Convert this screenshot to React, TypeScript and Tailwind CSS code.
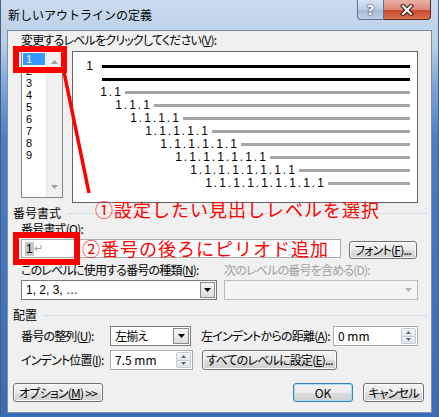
import React from 'react';

// Access-key underline
const U: React.FC<{ children: React.ReactNode }> = ({ children }) => (
  <span className="underline underline-offset-[1px]">{children}</span>
);

const Btn: React.FC<{ className?: string; focused?: boolean; children: React.ReactNode }> = ({
  className = '',
  focused = false,
  children,
}) => (
  <div
    className={`flex items-center justify-center whitespace-nowrap rounded-[3px] border ${
      focused
        ? 'border-[#3c7fb1] shadow-[inset_0_0_0_1px_#a8dcf7]'
        : 'border-[#707070] shadow-[inset_0_0_0_1px_#fbfbfb]'
    } bg-[linear-gradient(to_bottom,#f2f2f2_0%,#ebebeb_50%,#dddddd_51%,#cfcfcf_100%)] leading-[12px] ${className}`}
  >
    {children}
  </div>
);

const DownTri: React.FC<{ color?: string }> = ({ color = '#000' }) => (
  <svg width="7" height="4" viewBox="0 0 7 4">
    <path d="M0 0H7L3.5 4Z" fill={color} />
  </svg>
);

const Spin: React.FC<{ className?: string; value: string }> = ({ className = '', value }) => (
  <div className={`flex h-[20px] border border-[#abadb3] bg-white ${className}`}>
    <div className="flex flex-1 items-center pl-[4px] tracking-normal">{value}</div>
    <div className="my-[1px] mr-[1px] flex w-[15px] flex-col">
      <div className="flex flex-1 items-center justify-center rounded-t-[2px] border border-[#c5cbd5] bg-[linear-gradient(to_bottom,#f7f9fb,#e2e7ee)]">
        <svg width="5" height="3" viewBox="0 0 5 3">
          <path d="M0 3H5L2.5 0Z" fill="#4d6185" />
        </svg>
      </div>
      <div className="flex flex-1 items-center justify-center rounded-b-[2px] border border-t-0 border-[#c5cbd5] bg-[linear-gradient(to_bottom,#f2f5f8,#dde3ea)]">
        <svg width="5" height="3" viewBox="0 0 5 3">
          <path d="M0 0H5L2.5 3Z" fill="#4d6185" />
        </svg>
      </div>
    </div>
  </div>
);

const Group: React.FC<{ className?: string; title: string }> = ({ className = '', title }) => (
  <div className={`ml-[5px] mr-[4px] flex h-[12px] items-center ${className}`}>
    <span className="leading-[12px] tracking-normal">{title}</span>
    <div className="ml-[6px] h-px flex-1 bg-[#d5dfe5]" />
  </div>
);

const levelPad = [
  'pl-[27px]',
  'pl-[42px]',
  'pl-[57px]',
  'pl-[72px]',
  'pl-[87px]',
  'pl-[102px]',
  'pl-[117px]',
  'pl-[132px]',
];

const Num: React.FC<{ text: string }> = ({ text }) => (
  <span className="flex font-['Liberation_Sans',sans-serif] tracking-normal">
    {text.split('').map((c, i) => (
      <span key={i} className="inline-block w-[7px] text-center">
        {c}
      </span>
    ))}
  </span>
);

const Preview: React.FC = () => (
  <div className="ml-[9px] h-[152px] w-[346px] border border-[#646464] bg-white pt-[8px] pr-[7px] text-[12px] leading-[13px]">
    <div className="flex h-[13px] items-center pl-[13px]">
      <Num text="1" />
      <div className="ml-[9px] h-[3px] flex-1 bg-black" />
    </div>
    <div className="flex h-[13px] items-center pl-[29px]">
      <div className="h-[3px] flex-1 bg-black" />
    </div>
    {levelPad.map((pad, i) => {
      const n = i + 2;
      const text = Array(n).fill('1').join('.');
      return (
        <div key={n} className={`flex h-[13px] items-center ${pad}`}>
          <Num text={text} />
          <div className="ml-[4px] h-[3px] flex-1 bg-[#a6a6a6]" />
        </div>
      );
    })}
  </div>
);

const ListBox: React.FC = () => (
  <div className="flex h-[147px] w-[42px] border border-[#828790] bg-white text-[11px] leading-[12px]">
    <div className="flex-1 pt-[1px]">
      {['1', '2', '3', '4', '5', '6', '7', '8', '9'].map((n, i) => (
        <div
          key={n}
          className={`mx-[1px] h-[12px] pl-[3px] font-['Liberation_Sans',sans-serif] tracking-normal ${
            i === 0 ? 'bg-[#3399ff] text-white' : ''
          }`}
        >
          {n}
        </div>
      ))}
    </div>
    <div className="flex w-[16px] flex-col items-center justify-between border-l border-[#e6e6e6] bg-[#f0f0f0] pt-[8px] pb-[8px]">
      <svg width="7" height="4" viewBox="0 0 7 4">
        <path d="M0 4H7L3.5 0Z" fill="#a0a0a0" />
      </svg>
      <svg width="7" height="4" viewBox="0 0 7 4">
        <path d="M0 0H7L3.5 4Z" fill="#a0a0a0" />
      </svg>
    </div>
  </div>
);

export default function App() {
  return (
    <div className="relative h-[417px] w-[439px] overflow-hidden border-x border-[#46607f] bg-[linear-gradient(to_bottom,#c9dbef_0px,#b9cee7_45px,#7ea6da_85px,#4a7dc3_140px,#3a6db7_417px)] font-['Noto_Sans_CJK_JP',sans-serif] text-[12px] text-black">
      {/* title bar */}
      <div className="flex h-[30px] items-start">
        <div className="ml-[7px] mt-[8px] leading-[14px] text-[#000]">新しいアウトラインの定義</div>
        <div className="ml-auto mr-[7px] flex">
          <div className="flex h-[20px] w-[27px] items-center justify-center rounded-bl-[4px] border border-t-0 border-[#5d7190] bg-[linear-gradient(to_bottom,#dbe5f1_0%,#bccde2_50%,#a3b9d4_51%,#bed1e7_100%)] font-['DejaVu_Sans',sans-serif] text-[14px] font-bold leading-[14px] text-white [text-shadow:0_0_2px_#1d2c44,0_0_1px_#1d2c44]">
            ?
          </div>
          <div className="flex h-[20px] w-[47px] items-center justify-center rounded-br-[4px] border border-t-0 border-l-0 border-[#5a2720] bg-[linear-gradient(to_bottom,#eab0a3_0%,#dc8877_50%,#c8442f_51%,#d8714f_100%)]">
            <svg width="14" height="12" viewBox="0 0 14 12">
              <path d="M3 2L11 10M11 2L3 10" stroke="#3a130d" strokeWidth="4.2" strokeLinecap="square" />
              <path d="M3 2L11 10M11 2L3 10" stroke="#fff" strokeWidth="2.2" strokeLinecap="square" />
            </svg>
          </div>
        </div>
      </div>

      {/* dialog body */}
      <div className="mx-[6px] flex h-[383px] flex-col whitespace-nowrap border border-[#7d8fa8] bg-[#f0f0f0] tracking-[-0.8px] [font-feature-settings:'palt']">
        <div className="ml-[13px] mt-[3px] h-[12px] leading-[12px]">
          変更するレベルをクリックしてください(<U>V</U>):
        </div>

        <div className="ml-[13px] mt-[5px] flex items-start">
          <ListBox />
          <Preview />
        </div>

        <Group className="mt-[4px]" title="番号書式" />

        <div className="ml-[13px] mt-[4px] h-[12px] leading-[12px]">
          番号書式(<U>O</U>):
        </div>

        <div className="ml-[13px] mt-[4px] flex h-[20px] items-start">
          <div className="flex h-[19px] w-[320px] items-center border border-[#abadb3] bg-white pl-[3px] font-['Liberation_Sans',sans-serif] tracking-normal">
            <span className="bg-[#c8c8c8] px-px leading-[14px]">1</span>
            <span className="text-[11px] text-[#a0a0a0]">↵</span>
          </div>
          <Btn className="ml-[8px] mt-[2px] h-[18px] w-[68px]">
            フォント(<U>F</U>)...
          </Btn>
        </div>

        <div className="ml-[13px] mt-[5px] flex h-[12px] leading-[12px]">
          <div className="w-[203px]">
            このレベルに使用する番号の種類(<U>N</U>):
          </div>
          <div className="text-[#a0a0a0]">次のレベルの番号を含める(D):</div>
        </div>

        <div className="ml-[13px] mt-[4px] flex h-[20px]">
          <div className="flex h-[20px] w-[196px] border border-[#7a7a7a] bg-white">
            <div className="flex flex-1 items-center pl-[4px] font-['Liberation_Sans',sans-serif] tracking-normal">1, 2, 3, …</div>
            <div className="my-[1px] mr-[1px] flex w-[15px] items-center justify-center border border-[#8a8a8a] bg-[linear-gradient(to_bottom,#f4f4f4,#dcdcdc)]">
              <DownTri />
            </div>
          </div>
          <div className="ml-[7px] flex h-[20px] w-[194px] border border-[#bcbcbc] bg-[#f4f4f4]">
            <div className="flex-1" />
            <div className="my-[1px] mr-[1px] flex w-[15px] items-center justify-center bg-[#f4f4f4]">
              <DownTri color="#b5b5b5" />
            </div>
          </div>
        </div>

        <Group className="mt-[9px]" title="配置" />

        <div className="ml-[13px] mt-[5px] flex h-[20px] items-center">
          <div className="w-[89px] leading-[12px]">
            番号の整列(<U>U</U>):
          </div>
          <div className="flex h-[20px] w-[81px] border border-[#7a7a7a] bg-white">
            <div className="flex flex-1 items-center pl-[4px]">左揃え</div>
            <div className="my-[1px] mr-[1px] flex w-[16px] items-center justify-center border border-[#8a8a8a] bg-[linear-gradient(to_bottom,#f4f4f4,#dcdcdc)]">
              <DownTri />
            </div>
          </div>
          <div className="ml-[10px] w-[132px] leading-[12px]">
            左インデントからの距離(<U>A</U>):
          </div>
          <Spin className="w-[85px]" value="0 mm" />
        </div>

        <div className="ml-[13px] mt-[4px] flex h-[20px] items-center">
          <div className="w-[89px] leading-[12px]">
            インデント位置(<U>I</U>):
          </div>
          <Spin className="w-[83px]" value="7.5 mm" />
          <Btn className="ml-[9px] h-[20px] w-[135px]">
            すべてのレベルに設定(<U>E</U>)...
          </Btn>
        </div>

        <div className="ml-[5px] mt-[13px] flex h-[19px]">
          <Btn className="h-[19px] w-[90px]">
            オプション(<U>M</U>) &gt;&gt;
          </Btn>
          <Btn focused className="ml-[190px] h-[19px] w-[60px] tracking-normal">
            OK
          </Btn>
          <Btn className="ml-[10px] h-[19px] w-[61px]">キャンセル</Btn>
        </div>
      </div>

      {/* red annotations drawn over the dialog */}
      <div className="pointer-events-none absolute inset-0">
        <div className="absolute left-[12px] top-[46px] h-[27px] w-[54px] border-[6px] border-[#ff0000]" />
        <div className="absolute left-[12px] top-[232px] h-[33px] w-[67px] border-[6px] border-[#ff0000]" />
        <svg className="absolute left-0 top-0" width="439" height="417">
          <line x1="63" y1="72" x2="88" y2="193" stroke="#ff0000" strokeWidth="3.5" />
        </svg>
        <div className="absolute left-[94px] top-[200px] font-['Noto_Sans_CJK_JP',sans-serif] text-[18px] leading-[18px] tracking-[1px] text-[#ff0000]">
          ①設定したい見出しレベルを選択
        </div>
        <div className="absolute left-[81px] top-[239px] font-['Noto_Sans_CJK_JP',sans-serif] text-[18px] leading-[18px] tracking-[1px] text-[#ff0000]">
          ②番号の後ろにピリオド追加
        </div>
      </div>
    </div>
  );
}
